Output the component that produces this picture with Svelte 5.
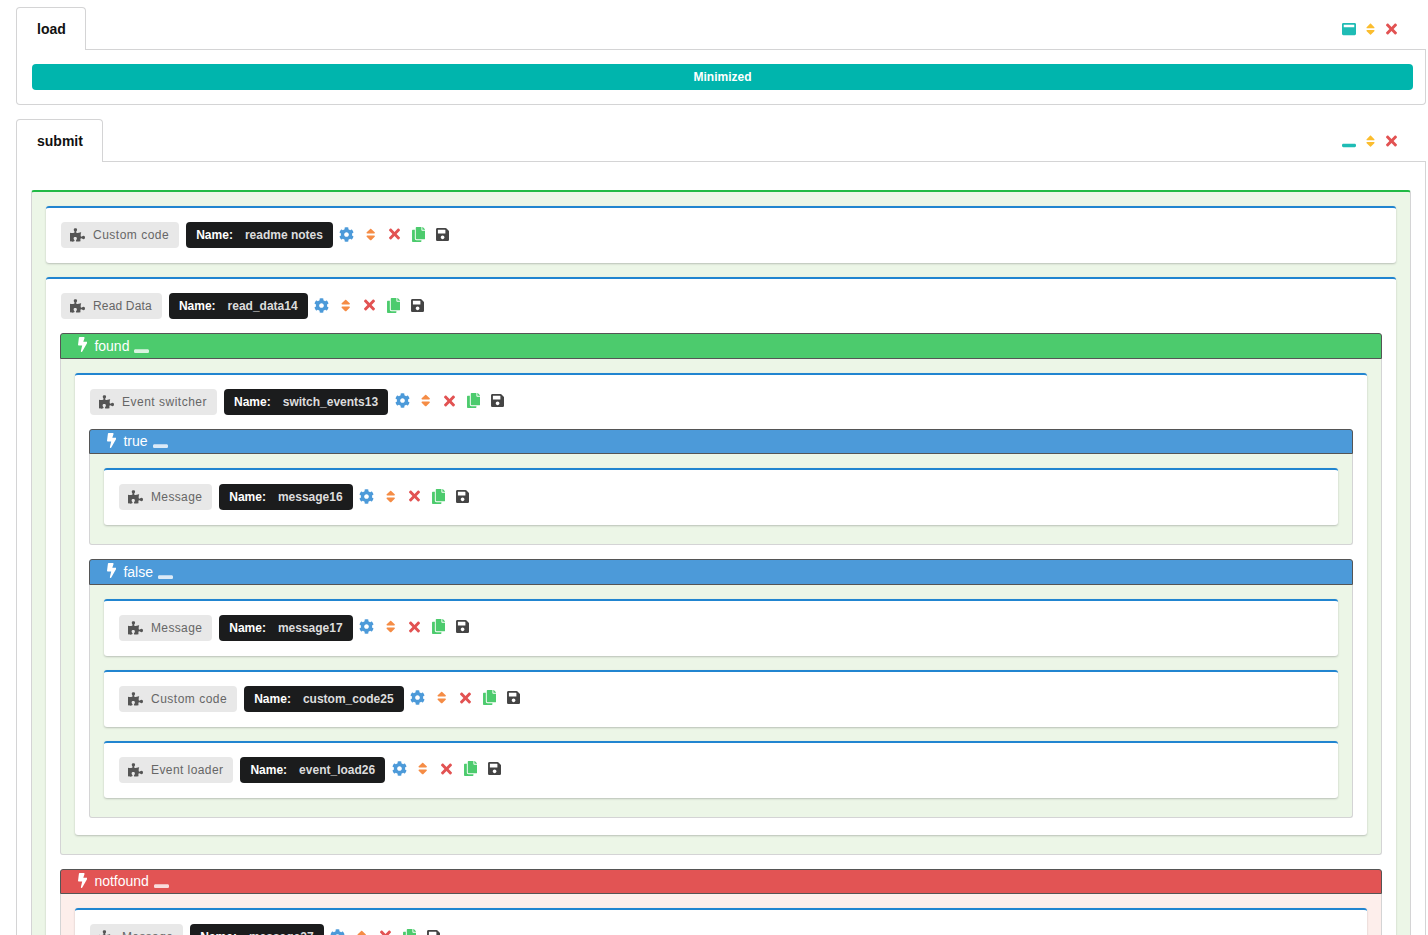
<script>
  const icons = {
    cog: ['0 0 512 512', 'M487.4 315.7l-42.6-24.6c4.3-23.2 4.3-47 0-70.2l42.6-24.6c4.9-2.8 7.1-8.6 5.5-14-11.1-35.6-30-67.8-54.7-94.6-3.8-4.1-10-5.1-14.8-2.3L380.8 110c-17.9-15.4-38.5-27.3-60.8-35.1V25.8c0-5.6-3.9-10.5-9.4-11.7-36.7-8.2-74.3-7.8-109.2 0-5.5 1.2-9.4 6.1-9.4 11.7V75c-22.2 7.9-42.8 19.8-60.8 35.1L88.7 85.5c-4.9-2.8-11-1.9-14.8 2.3-24.7 26.7-43.6 58.9-54.7 94.6-1.7 5.4.6 11.2 5.5 14L67.3 221c-4.3 23.2-4.3 47 0 70.2l-42.6 24.6c-4.9 2.8-7.1 8.6-5.5 14 11.1 35.6 30 67.8 54.7 94.6 3.8 4.1 10 5.1 14.8 2.3l42.6-24.6c17.9 15.4 38.5 27.3 60.8 35.1v49.2c0 5.6 3.9 10.5 9.4 11.7 36.7 8.2 74.3 7.8 109.2 0 5.5-1.2 9.4-6.1 9.4-11.7v-49.2c22.2-7.9 42.8-19.8 60.8-35.1l42.6 24.6c4.9 2.8 11 1.9 14.8-2.3 24.7-26.7 43.6-58.9 54.7-94.6 1.5-5.5-.7-11.3-5.6-14.1zM256 336c-44.1 0-80-35.9-80-80s35.9-80 80-80 80 35.9 80 80-35.9 80-80 80z'],
    sort: ['0 0 320 512', 'M41 288h238c21.4 0 32.1 25.9 17 41L177 448c-9.4 9.4-24.6 9.4-33.9 0L24 329c-15.1-15.1-4.4-41 17-41zm255-105L177 64c-9.4-9.4-24.6-9.4-33.9 0L24 183c-15.1 15.1-4.4 41 17 41h238c21.4 0 32.1-25.9 17-41z'],
    times: ['0 0 352 512', 'M242.72 256l100.07-100.07c12.28-12.28 12.28-32.19 0-44.48l-22.24-22.24c-12.28-12.28-32.19-12.28-44.48 0L176 189.28 75.93 89.21c-12.28-12.28-32.19-12.28-44.48 0L9.21 111.45c-12.28 12.28-12.28 32.19 0 44.48L109.28 256 9.21 356.07c-12.28 12.28-12.28 32.19 0 44.48l22.24 22.24c12.28 12.28 32.2 12.28 44.48 0L176 322.72l100.07 100.07c12.28 12.28 32.2 12.28 44.48 0l22.24-22.24c12.28-12.28 12.28-32.19 0-44.48L242.72 256z'],
    copy: ['0 0 448 512', 'M320 448v40c0 13.255-10.745 24-24 24H24c-13.255 0-24-10.745-24-24V120c0-13.255 10.745-24 24-24h72v296c0 30.879 25.121 56 56 56h168zm0-344V0H152c-13.255 0-24 10.745-24 24v368c0 13.255 10.745 24 24 24h272c13.255 0 24-10.745 24-24V128H344c-13.2 0-24-10.8-24-24zm120.971-31.029L375.029 7.029A24 24 0 0 0 358.059 0H352v96h96v-6.059a24 24 0 0 0-7.029-16.97z'],
    save: ['0 0 448 512', 'M433.941 129.941l-83.882-83.882A48 48 0 0 0 316.118 32H48C21.49 32 0 53.49 0 80v352c0 26.51 21.49 48 48 48h352c26.51 0 48-21.49 48-48V163.882a48 48 0 0 0-14.059-33.941zM224 416c-35.346 0-64-28.654-64-64 0-35.346 28.654-64 64-64s64 28.654 64 64c0 35.346-28.654 64-64 64zm96-304.52V212c0 6.627-5.373 12-12 12H76c-6.627 0-12-5.373-12-12V108c0-6.627 5.373-12 12-12h228.52c3.183 0 6.235 1.264 8.485 3.515l3.48 3.48A11.996 11.996 0 0 1 320 111.48z'],
    bolt: ['0 0 320 512', 'M296 160H180.6l42.6-129.8C227.2 15 215.7 0 200 0H56C44 0 33.8 8.9 32.2 20.8l-32 240C-1.7 275.2 9.5 288 24 288h118.7L96.6 482.5c-3.6 15.2 8 29.5 23.3 29.5 8.4 0 16.4-4.4 20.8-12l176-304c9.3-15.9-2.2-36-20.7-36z'],
    minimize: ['0 0 512 512', 'M464 352H48c-26.5 0-48 21.5-48 48v32c0 26.5 21.5 48 48 48h416c26.5 0 48-21.5 48-48v-32c0-26.5-21.5-48-48-48z'],
    maximize: ['0 0 512 512', 'M464 32H48C21.5 32 0 53.5 0 80v352c0 26.5 21.5 48 48 48h416c26.5 0 48-21.5 48-48V80c0-26.5-21.5-48-48-48zm-16 160H64v-84c0-6.6 5.4-12 12-12h360c6.6 0 12 5.4 12 12v84z'],
    puzzle: ['0 0 576 512', 'M519.442 288.651c-41.519 0-59.5 31.593-82.058 31.593C377.409 320.244 432 144 432 144s-196.288 80-196.288-3.297c0-35.827 36.288-46.25 36.288-85.985C272 19.216 243.885 0 210.539 0c-34.654 0-66.366 18.891-66.366 56.346 0 41.364 31.711 59.277 31.711 81.75C175.885 207.719 0 166.758 0 166.758v333.237s178.635 41.047 178.635-28.662c0-22.473-40-40.107-40-81.471 0-37.456 29.25-56.346 63.577-56.346 33.673 0 61.788 19.216 61.788 54.717 0 39.735-36.288 50.158-36.288 85.985 0 60.803 129.675 25.73 181.23 25.73 0 0-34.725-120.101 25.827-120.101 35.962 0 46.423 36.152 86.308 36.152C556.712 416 576 387.99 576 354.443c0-34.199-18.962-65.792-56.558-65.792z']
  };

  // label tracking per block type, the widths differ a bit between them
  const tracking = { 'Read Data': 0.17, Message: 0.36, 'Event loader': 0.42 };

  const msg = (name) => ({ type: 'Message', name });

  const tree = [
    { type: 'Custom code', name: 'readme notes' },
    {
      type: 'Read Data',
      name: 'read_data14',
      groups: [
        {
          title: 'found',
          color: 'green',
          items: [
            {
              type: 'Event switcher',
              name: 'switch_events13',
              groups: [
                { title: 'true', color: 'blue', items: [msg('message16')] },
                {
                  title: 'false',
                  color: 'blue',
                  items: [
                    msg('message17'),
                    { type: 'Custom code', name: 'custom_code25' },
                    { type: 'Event loader', name: 'event_load26' }
                  ]
                }
              ]
            }
          ]
        },
        { title: 'notfound', color: 'red', items: [msg('message27')] }
      ]
    }
  ];
</script>

{#snippet icon(name, cls)}
  <svg class="icon {cls}" viewBox={icons[name][0]} aria-hidden="true"><path fill="currentColor" d={icons[name][1]} /></svg>
{/snippet}

{#snippet card(item)}
  <div class="card">
    <div class="card-row">
      <span class="type-label" style="letter-spacing: {tracking[item.type] ?? 0.5}px">{@render icon('puzzle', 'i-puzzle')}{item.type}</span>
      <span class="name-label"><b>Name:</b><span class="name-value">{item.name}</span></span>
      <span class="actions">
        <button class="act">{@render icon('cog', 'a-cog c-blue')}</button>
        <button class="act">{@render icon('sort', 'a-sort c-orange')}</button>
        <button class="act">{@render icon('times', 'a-times c-red')}</button>
        <button class="act">{@render icon('copy', 'a-copy c-green')}</button>
        <button class="act">{@render icon('save', 'a-copy c-dark')}</button>
      </span>
    </div>
    {#if item.groups}
      {#each item.groups as group}
        <div class="group {group.color}">
          <div class="group-head">
            {@render icon('bolt', 'i-bolt')}
            <span>{group.title}</span>
            {@render icon('minimize', 'i-min')}
          </div>
          <div class="group-body">
            {#each group.items as child}
              {@render card(child)}
            {/each}
          </div>
        </div>
      {/each}
    {/if}
  </div>
{/snippet}

<div class="page">
  <section class="panel">
    <header class="tabs">
      <div class="tab">load</div>
      <div class="tab-tools">
        {@render icon('maximize', 'i-win c-teal')}
        {@render icon('sort', 'i-sort c-yellow')}
        {@render icon('times', 'i-times c-red')}
      </div>
    </header>
    <div class="panel-body">
      <div class="minimized">Minimized</div>
    </div>
  </section>

  <section class="panel">
    <header class="tabs">
      <div class="tab">submit</div>
      <div class="tab-tools">
        {@render icon('minimize', 'i-win c-teal')}
        {@render icon('sort', 'i-sort c-yellow')}
        {@render icon('times', 'i-times c-red')}
      </div>
    </header>
    <div class="panel-body open">
      <div class="root">
        {#each tree as item}
          {@render card(item)}
        {/each}
      </div>
    </div>
  </section>
</div>

<style>
  :global(body) {
    margin: 0;
    background: #fff;
    font-family: "Liberation Sans", Arial, sans-serif;
  }

  .page {
    height: 935px;
    overflow: hidden;
    padding: 7px 2px 0 16px;
    box-sizing: border-box;
  }

  .panel {
    margin-bottom: 14px;
  }

  .tabs {
    display: flex;
    justify-content: space-between;
    height: 43px;
    box-sizing: border-box;
    border-bottom: 1px solid #d4d4d5;
  }

  .tab {
    height: 43px;
    box-sizing: border-box;
    padding: 13px 19px 0 20px;
    background: #fff;
    border: 1px solid #d4d4d5;
    border-bottom: none;
    border-radius: 4px 4px 0 0;
    font-size: 14px;
    line-height: 16px;
    font-weight: bold;
    color: #111;
  }

  .tab-tools {
    display: flex;
    align-items: center;
    height: 43px;
    padding-right: 29px;
  }

  .icon {
    display: block;
    flex: none;
  }

  .i-win {
    width: 14px;
    height: 14px;
    margin-right: 9.5px;
  }

  .i-sort {
    width: 9px;
    height: 14.4px;
    margin: 1px 11.5px 0 0;
  }

  .i-times {
    width: 11px;
    height: 16px;
  }

  .a-cog {
    width: 15px;
    height: 15px;
  }

  .a-sort {
    width: 9.4px;
    height: 15px;
  }

  .a-times {
    width: 11px;
    height: 16px;
  }

  .a-copy {
    width: 13.2px;
    height: 15px;
  }

  .c-teal { color: #1fbcb5; }
  .c-yellow { color: #fbbd2e; }
  .c-red { color: #e25252; }
  .c-blue { color: #4c9ad9; }
  .c-orange { color: #f58c45; }
  .c-green { color: #4ccb6d; }
  .c-dark { color: #444; }

  .panel-body {
    padding: 14px 12px 14px 15px;
    border: 1px solid #d4d4d5;
    border-top: none;
    border-radius: 0 0 4px 4px;
  }

  .panel-body.open {
    padding: 28px 14px 0;
  }

  .minimized {
    height: 26px;
    line-height: 26px;
    text-align: center;
    background: #00b5ad;
    color: #fff;
    font-size: 12px;
    font-weight: bold;
    border-radius: 4px;
  }

  .root {
    padding: 14px 14px 10px;
    background: #ecf6e7;
    border-top: 2px solid #21ba45;
    border-left: 1px solid #d4d4d5;
    border-right: 1px solid #d4d4d5;
    border-radius: 3px 3px 0 0;
  }

  .card {
    margin-bottom: 14px;
    padding: 14px 14px 1px;
    background: #fff;
    border-top: 2px solid #2185d0;
    border-radius: 3px;
    box-shadow: 0 1px 2px rgba(34, 36, 38, 0.25);
  }

  .card-row {
    display: flex;
    align-items: center;
    height: 26px;
    margin: 0 0 14px 1px;
  }

  .type-label {
    display: flex;
    align-items: center;
    height: 26px;
    padding: 0 10px 0 9px;
    background: #e8e8e8;
    border-radius: 4px;
    color: #666;
    font-size: 12px;
  }

  .i-puzzle {
    width: 15px;
    height: 14px;
    margin-right: 8px;
    color: #555;
  }

  .name-label {
    display: flex;
    align-items: center;
    height: 26px;
    margin-left: 7px;
    padding: 0 10px;
    background: #1b1c1d;
    border-radius: 4px;
    color: #fff;
    font-size: 12px;
  }

  .name-value {
    margin-left: 12px;
    color: #ddd;
    font-weight: bold;
  }

  .actions {
    display: flex;
    align-items: center;
    margin: -2px 0 0 2px;
  }

  .act {
    display: flex;
    align-items: center;
    justify-content: center;
    width: 23.9px;
    height: 26px;
    padding: 0;
    background: none;
    border: none;
  }

  .group {
    margin-bottom: 14px;
  }

  .group:last-child {
    margin-bottom: 16px;
  }

  .group-head {
    display: flex;
    align-items: center;
    height: 25.5px;
    box-sizing: border-box;
    padding-left: 17px;
    border: 1px solid #555;
    border-radius: 3px 3px 0 0;
    color: #fff;
    font-size: 14px;
  }

  .i-bolt {
    width: 9.4px;
    height: 15px;
    margin-right: 7px;
    margin-top: -2px;
  }

  .i-min {
    width: 15px;
    height: 15px;
    margin-left: 5px;
    margin-top: 1px;
    opacity: 0.8;
  }

  .group-body {
    padding: 14px 14px 5px;
    border: 1px solid #d4d4d5;
    border-top: none;
    border-radius: 0 0 3px 3px;
  }

  .green .group-head { background: #4ccb6d; }
  .green .group-body,
  .blue .group-body { background: #ecf6e7; }
  .blue .group-head { background: #4c9ad9; }
  .red .group-head { background: #e25454; }
  .red .group-body { background: #fdeeeb; }
</style>
